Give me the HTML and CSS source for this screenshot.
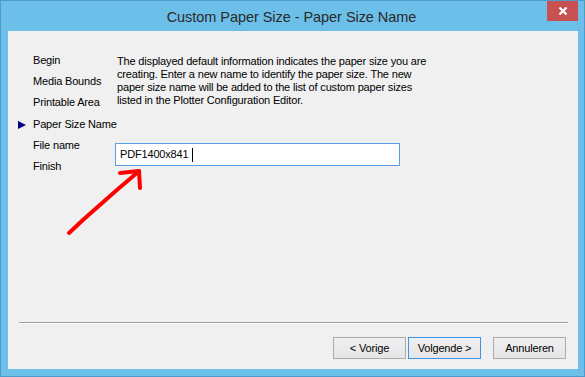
FILE: index.html
```html
<!DOCTYPE html>
<html lang="en">
<head>
  <meta charset="UTF-8" />
  <title>Custom Paper Size - Paper Size Name</title>
  <link rel="stylesheet" href="styles.css">
</head>
<body>

  <div class="window">
    <div class="titlebar">
      <span class="title">Custom Paper Size - Paper Size Name</span>
      <button class="close" aria-label="Close">
        <svg width="10" height="10" viewBox="0 0 10 10">
          <path d="M1.5 1.5 L8.5 8.5 M8.5 1.5 L1.5 8.5" stroke="#fff" stroke-width="2.2"/>
        </svg>
      </button>
    </div>

    <div class="client">
      <div class="wizard">
        <ul class="steps">
          <li>Begin</li>
          <li>Media Bounds</li>
          <li>Printable Area</li>
          <li class="current">Paper Size Name</li>
          <li>File name</li>
          <li>Finish</li>
        </ul>

        <div class="page">
          <p class="info">
            The displayed default information indicates the paper size you are<br>
            creating. Enter a new name to identify the paper size. The new<br>
            paper size name will be added to the list of custom paper sizes<br>
            listed in the Plotter Configuration Editor.
          </p>
          <div class="field">PDF1400x841<span class="caret"></span></div>
        </div>
      </div>

      <div class="rule"></div>

      <div class="actions">
        <button class="btn btn-back">&lt; Vorige</button>
        <button class="btn btn-default">Volgende &gt;</button>
        <button class="btn">Annuleren</button>
      </div>
    </div>

    <!-- red annotation drawn over the dialog -->
    <svg class="annotation" width="585" height="377" viewBox="0 0 585 377">
      <path d="M69 233 L84 219 L101 204 L118 189 L131 178 L139 171" fill="none" stroke="#ff0000" stroke-width="4" stroke-linecap="round" stroke-linejoin="round"/>
      <path d="M120 173 L139 171 L140 188" fill="none" stroke="#ff0000" stroke-width="4" stroke-linecap="round" stroke-linejoin="round"/>
    </svg>
  </div>

</body>
</html>
```

FILE: styles.css
```css
* {
  box-sizing: border-box;
  margin: 0;
  padding: 0;
}

body {
  background: #6cbfe9;
  font-family: 'Liberation Sans', Arial, sans-serif;
  font-size: 11px;
  letter-spacing: -0.17px;
  color: #000;
}

.window {
  position: relative;
  width: 585px;
  height: 377px;
  background: #6cbfe9;
  border: 1px solid #4f9bcc;
  display: flex;
  flex-direction: column;
}

.titlebar {
  height: 30px;
  display: grid;
  grid-template-columns: 1fr auto 1fr;
  padding-right: 6px;
}

.title {
  grid-column: 2;
  align-self: center;
  font-size: 14.5px;
  letter-spacing: -0.05px;
  color: #2a2a2a;
  padding-top: 1px;
  padding-left: 4px;
}

.close {
  grid-column: 3;
  justify-self: end;
  align-self: start;
  width: 31px;
  height: 20px;
  border: none;
  background: #c75050;
  display: flex;
  align-items: center;
  justify-content: center;
}

.client {
  flex: 1;
  margin: 0 6px 7px 7px;
  background: #f0f0f0;
  display: flex;
  flex-direction: column;
}

.wizard {
  flex: 1;
  display: flex;
}

.steps {
  list-style: none;
  width: 109px;
  padding: 19px 0 0 25px;
}

.steps li {
  height: 21.2px;
  line-height: 21px;
  white-space: nowrap;
  position: relative;
}

.steps li.current::before {
  content: "";
  position: absolute;
  left: -15px;
  top: 7px;
  border-top: 4px solid transparent;
  border-bottom: 4px solid transparent;
  border-left: 8px solid #000080;
}

.page {
  padding-top: 24px;
}

.info {
  line-height: 13px;
  margin-bottom: 36px;
}

.field {
  width: 285px;
  height: 23px;
  margin-left: -2px;
  background: #fff;
  border: 1px solid #5a9ee6;
  padding-left: 4px;
  font-size: 11px;
  line-height: 21px;
  display: flex;
  align-items: center;
}

.caret {
  display: inline-block;
  width: 1px;
  height: 14px;
  background: #000;
  margin-left: 4px;
}

.rule {
  height: 2px;
  margin: 0 10px 0 11px;
  border-top: 1px solid #a0a0a0;
  border-bottom: 1px solid #fff;
}

.actions {
  display: flex;
  justify-content: flex-end;
  padding: 13px 12px 10px 0;
}

.btn {
  width: 73px;
  height: 22px;
  font-family: 'Liberation Sans', Arial, sans-serif;
  font-size: 11px;
  letter-spacing: -0.17px;
  color: #000;
  border: 1px solid #acacac;
  background: linear-gradient(#f0f0f0, #e5e5e5);
}

.btn-back {
  margin-right: 2px;
}

.btn-default {
  margin-right: 12px;
  border-color: #3c94e8;
}

.annotation {
  position: absolute;
  left: -1px;
  top: -1px;
  pointer-events: none;
}
```
